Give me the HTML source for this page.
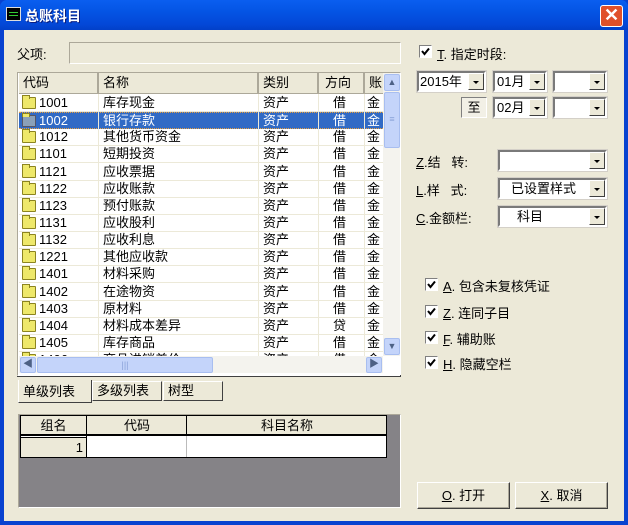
<!DOCTYPE html>
<html><head><meta charset="utf-8"><style>
*{margin:0;padding:0;box-sizing:border-box}
body{width:628px;height:525px;overflow:hidden;background:#0842d0;font-family:"Liberation Sans","Noto Sans CJK SC","WenQuanYi Zen Hei",sans-serif;font-size:13px;color:#000;position:relative}
.a{position:absolute}
#title{left:0;top:0;width:628px;height:30px;background:linear-gradient(#0a5ef0,#0454e4 40%,#0348d8 80%,#0240c8);border-radius:7px 7px 0 0}
#client{left:4px;top:30px;width:620px;height:491px;background:#ece9d8}
.sunk{border:1px solid;border-color:#aca899 #fff #fff #aca899}
.row{position:absolute;left:0;width:364px;height:17px;border-bottom:1px solid #ece9d8;white-space:nowrap;font-size:13px;line-height:16px}
.row span{position:absolute;top:0}
.fold{position:absolute;left:3px;top:2px;width:14px;height:12px;background:#eee86a;border:1px solid #8c8420;border-radius:1px}
.fold:before{content:"";position:absolute;left:-1px;top:-3px;width:6px;height:3px;background:#eee86a;border:1px solid #8c8420;border-bottom:none}
.hd{position:absolute;top:0;height:21px;background:#ece9d8;border-right:2px solid #aca899;border-bottom:1px solid #aca899;padding-left:4px;line-height:20px}
.combo{position:absolute;height:21px;background:#fff;border:2px solid;border-color:#7a7a7a #fff #fff #7a7a7a;outline:1px solid #d4d0c8;font-size:13px;line-height:17px}
.combo .b{position:absolute;right:0;top:0;width:16px;height:17px;background:#ece9d8;border:1px solid;border-color:#fff #404040 #404040 #fff}
.combo .b:after{content:"";position:absolute;left:4px;top:7px;border-left:3px solid transparent;border-right:3px solid transparent;border-top:3px solid #000}
.cb{position:absolute;width:13px;height:13px;background:#fff;border:1px solid;border-color:#808080 #fff #fff #808080}
.cb svg{position:absolute;left:1px;top:1px}
.btn{position:absolute;background:#ece9d8;border:1px solid;border-color:#fff #404040 #404040 #fff;box-shadow:inset -1px -1px #aca899;text-align:center}
u{text-decoration:underline}
</style></head><body>
<div id="title" class="a">
 <div class="a" style="left:6px;top:7px;width:15px;height:14px;background:#000;border:1px solid #ddd"><div class="a" style="left:2px;top:4px;width:9px;height:4px;border-top:1px solid #3c3;border-bottom:1px solid #3c3"></div></div>
 <div class="a" style="left:25px;top:6px;color:#fff;font-weight:bold;font-size:14px;text-shadow:1px 1px #0a1e80">总账科目</div>
 <div class="a" style="left:600px;top:5px;width:23px;height:22px;background:#e0502a;border:1px solid #fff;border-radius:3px;color:#fff;font-size:18px;font-weight:bold;line-height:19px;text-align:center">✕</div>
</div>
<div id="client" class="a"></div>
<div class="a" style="left:17px;top:44px">父项:</div>
<div class="a sunk" style="left:69px;top:42px;width:332px;height:22px"></div>

<div class="a sunk" style="left:17px;top:72px;width:384px;height:304px;background:#fff;overflow:hidden">
 <div class="a" style="left:1px;top:0;width:364px;height:283px;overflow:hidden">
  <div class="hd" style="left:0;width:80px">代码</div>
  <div class="hd" style="left:80px;width:160px">名称</div>
  <div class="hd" style="left:240px;width:60px">类别</div>
  <div class="hd" style="left:300px;width:46px;padding-left:6px">方向</div>
  <div class="hd" style="left:346px;width:30px">账</div>
  <div id="rows"></div>
 </div>
 <div class="a" style="left:365px;top:0;width:17px;height:283px;background:#f4f3ee"></div>
 <div class="a" style="left:366px;top:1px;width:16px;height:17px;background:#c4d4fa;border:1px solid #a8bef0;border-radius:2px;font-size:9px;text-align:center;line-height:14px;color:#4d6185">▲</div>
 <div class="a" style="left:366px;top:19px;width:16px;height:56px;background:#c4d4fa;border:1px solid #a8bef0;border-radius:2px;color:#8aa2d8;font-size:9px;text-align:center;line-height:52px">≡</div>
 <div class="a" style="left:366px;top:265px;width:16px;height:17px;background:#c4d4fa;border:1px solid #a8bef0;border-radius:2px;font-size:9px;text-align:center;line-height:14px;color:#4d6185">▼</div>
 <div class="a" style="left:1px;top:283px;width:364px;height:17px;background:#f4f3ee"></div>
 <div class="a" style="left:2px;top:284px;width:16px;height:16px;background:#c4d4fa;border:1px solid #a8bef0;border-radius:2px;font-size:10px;text-align:center;line-height:14px;color:#4d6185">◀</div>
 <div class="a" style="left:19px;top:284px;width:176px;height:16px;background:#c4d4fa;border:1px solid #a8bef0;border-radius:2px;color:#8aa2d8;font-size:9px;text-align:center;line-height:14px">|||</div>
 <div class="a" style="left:348px;top:284px;width:16px;height:16px;background:#c4d4fa;border:1px solid #a8bef0;border-radius:2px;font-size:10px;text-align:center;line-height:14px;color:#4d6185">▶</div>
</div>
<div class="a" style="left:17px;top:375px;width:384px;height:2px;border-bottom:1px solid #404040;border-right:1px solid #404040"></div>

<div class="a" style="left:18px;top:380px;width:74px;height:23px;background:#ece9d8;border:1px solid;border-color:#fff #404040 #404040 #fff;border-top:none;padding-left:4px;line-height:24px">单级列表</div>
<div class="a" style="left:92px;top:381px;width:70px;height:20px;border:1px solid;border-color:#fff #404040 #404040 #fff;padding-left:4px;line-height:18px">多级列表</div>
<div class="a" style="left:163px;top:381px;width:60px;height:20px;border:1px solid;border-color:#fff #404040 #404040 #fff;padding-left:4px;line-height:18px">树型</div>

<div class="a" style="left:18px;top:414px;width:383px;height:94px;background:#858387;border:1px solid;border-color:#aca899 #fff #fff #aca899"></div>
<div class="a" style="left:20px;top:415px;width:367px;height:43px;background:#fff;border:1px solid #000"></div>
<div class="a" style="left:20px;top:415px;width:367px;height:21px;background:#ece9d8;border:1px solid #000;border-bottom:2px solid #000"></div>
<div class="a" style="left:20px;top:416px;width:67px;text-align:center;line-height:20px">组名</div>
<div class="a" style="left:87px;top:416px;width:100px;text-align:center;line-height:20px">代码</div>
<div class="a" style="left:187px;top:416px;width:200px;text-align:center;line-height:20px">科目名称</div>
<div class="a" style="left:86px;top:415px;width:1px;height:43px;background:#000"></div>
<div class="a" style="left:186px;top:415px;width:1px;height:21px;background:#000"></div>
<div class="a" style="left:186px;top:436px;width:1px;height:21px;background:#bbb"></div>
<div class="a" style="left:21px;top:437px;width:65px;height:20px;background:#ece9d8;border-top:1px solid #000"></div>
<div class="a" style="left:21px;top:439px;width:62px;text-align:right;line-height:18px">1</div>

<div class="cb" style="left:419px;top:45px"><svg width="9" height="9"><path d="M1 4 L3.5 7 L8 1.5" stroke="#000" stroke-width="2" fill="none"/></svg></div>
<div class="a" style="left:437px;top:44px"><u>T</u>. 指定时段:</div>
<div class="combo" style="left:417px;top:71px;width:69px"><span style="padding-left:1px">2015年</span><div class="b"></div></div>
<div class="combo" style="left:493px;top:71px;width:54px"><span style="padding-left:2px">01月</span><div class="b"></div></div>
<div class="combo" style="left:553px;top:71px;width:54px"><div class="b"></div></div>
<div class="a" style="left:461px;top:97px;width:26px;height:21px;border:1px solid;border-color:#808080 #fff #fff #808080;background:#f2f0e6;text-align:center;line-height:19px">至</div>
<div class="combo" style="left:493px;top:97px;width:54px"><span style="padding-left:2px">02月</span><div class="b"></div></div>
<div class="combo" style="left:553px;top:97px;width:54px"><div class="b"></div></div>

<div class="a" style="left:416px;top:152px"><u>Z</u>.结&nbsp;&nbsp;&nbsp;转:</div>
<div class="a" style="left:416px;top:180px"><u>L</u>.样&nbsp;&nbsp;&nbsp;式:</div>
<div class="a" style="left:416px;top:208px"><u>C</u>.金额栏:</div>
<div class="combo" style="left:498px;top:150px;width:109px"><div class="b"></div></div>
<div class="combo" style="left:498px;top:178px;width:109px"><span style="padding-left:11px">已设置样式</span><div class="b"></div></div>
<div class="combo" style="left:498px;top:206px;width:109px"><span style="padding-left:17px">科目</span><div class="b"></div></div>

<div class="cb" style="left:425px;top:278px"><svg width="9" height="9"><path d="M1 4 L3.5 7 L8 1.5" stroke="#000" stroke-width="2" fill="none"/></svg></div><div class="a" style="left:443px;top:276px"><u>A</u>. 包含未复核凭证</div>
<div class="cb" style="left:425px;top:305px"><svg width="9" height="9"><path d="M1 4 L3.5 7 L8 1.5" stroke="#000" stroke-width="2" fill="none"/></svg></div><div class="a" style="left:443px;top:303px"><u>Z</u>. 连同子目</div>
<div class="cb" style="left:425px;top:331px"><svg width="9" height="9"><path d="M1 4 L3.5 7 L8 1.5" stroke="#000" stroke-width="2" fill="none"/></svg></div><div class="a" style="left:443px;top:329px"><u>F</u>. 辅助账</div>
<div class="cb" style="left:425px;top:356px"><svg width="9" height="9"><path d="M1 4 L3.5 7 L8 1.5" stroke="#000" stroke-width="2" fill="none"/></svg></div><div class="a" style="left:443px;top:354px"><u>H</u>. 隐藏空栏</div>

<div class="btn" style="left:417px;top:482px;width:93px;height:27px;line-height:25px"><u>O</u>. 打开</div>
<div class="btn" style="left:515px;top:482px;width:93px;height:27px;line-height:25px"><u>X</u>. 取消</div>

<script>
var d=[["1001","库存现金"],["1002","银行存款"],["1012","其他货币资金"],["1101","短期投资"],["1121","应收票据"],["1122","应收账款"],["1123","预付账款"],["1131","应收股利"],["1132","应收利息"],["1221","其他应收款"],["1401","材料采购"],["1402","在途物资"],["1403","原材料"],["1404","材料成本差异"],["1405","库存商品"],["1406","商品进销差价"]];
var h="";
d.forEach(function(r,i){var s=i==1;var t=(22+i*17.14).toFixed(1);
h+='<div class="row" style="top:'+t+'px;'+(s?'background:#316ac5;color:#fff;border-bottom:1px dotted #e8a040;border-top:1px dotted #e8a040':'')+'"><div class="fold" style="'+(s?'background:#8aa0b8;border-color:#556':'')+'"></div><span style="left:20px">'+r[0]+'</span><span style="left:84px">'+r[1]+'</span><span style="left:244px">资产</span><span style="left:314px">'+(i==13?'贷':'借')+'</span><span style="left:348px">金</span></div>';});
for(var x of [80,240,300,346]) h+='<div class="a" style="left:'+(x-1)+'px;top:21px;width:1px;height:270px;background:#ece9d8"></div>';
document.getElementById("rows").innerHTML=h;
</script>
</body></html>
